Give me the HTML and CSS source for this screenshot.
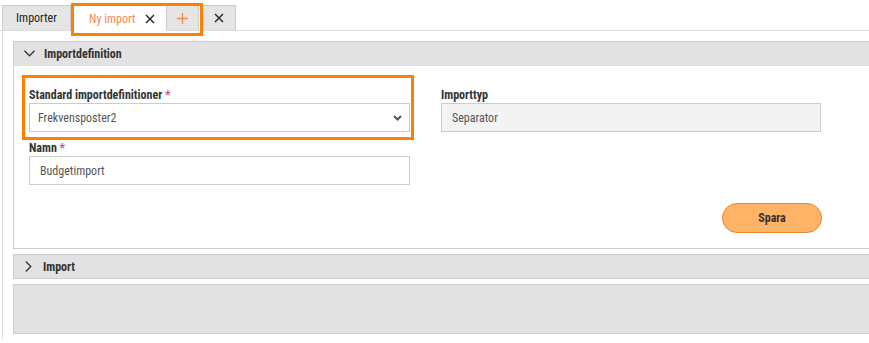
FILE: index.html
```html
<!DOCTYPE html>
<html lang="sv">
<head>
    <meta charset="utf-8">
    <title>Importer</title>
    <link rel="stylesheet" href="styles.css">
</head>
<body>

    <div class="tabs">
        <div class="tab first">Importer</div>
        <div class="tab-group">
            <div class="tab active">Ny import
                <svg class="ico" width="10" height="10" viewBox="0 0 10 10"><path d="M1 1L9 9M9 1L1 9" stroke="#222" stroke-width="1.4" fill="none"/></svg>
            </div>
            <div class="tab plus">
                <svg class="ico" width="11" height="11" viewBox="0 0 11 11"><path d="M5.5 0V11M0 5.5H11" stroke="#f58a4a" stroke-width="1.3" fill="none"/></svg>
            </div>
        </div>
        <div class="tab close">
            <svg class="ico" width="10" height="10" viewBox="0 0 10 10"><path d="M1 1L9 9M9 1L1 9" stroke="#222" stroke-width="1.4" fill="none"/></svg>
        </div>
    </div>

    <div class="content">
        <div class="section">
            <div class="section-head">
                <svg class="chev" width="11" height="7" viewBox="0 0 11 7"><path d="M0.5 0.8L5.5 5.8L10.5 0.8" stroke="#333" stroke-width="1.3" fill="none"/></svg>
                Importdefinition
            </div>
            <div class="section-body">
                <div class="form">
                    <div class="field marked">
                        <label>Standard importdefinitioner <span class="req">*</span></label>
                        <div class="input select">Frekvensposter2
                            <svg width="9" height="6" viewBox="0 0 9 6"><path d="M1 1L4.5 4.5L8 1" stroke="#555" stroke-width="2" fill="none"/></svg>
                        </div>
                    </div>
                    <div class="field">
                        <label>Importtyp</label>
                        <div class="input readonly">Separator</div>
                    </div>
                    <div class="field">
                        <label>Namn <span class="req">*</span></label>
                        <div class="input">Budgetimport</div>
                    </div>
                </div>
                <div class="actions">
                    <button class="btn">Spara</button>
                </div>
            </div>
        </div>

        <div class="section collapsed">
            <div class="section-head">
                <svg class="chev" width="7" height="11" viewBox="0 0 7 11"><path d="M0.8 0.5L5.8 5.5L0.8 10.5" stroke="#333" stroke-width="1.3" fill="none"/></svg>
                Import
            </div>
        </div>

        <div class="empty-box"></div>
    </div>

</body>
</html>
```

FILE: styles.css
```css
body {
    margin: 0;
    font-family: 'Roboto Condensed', 'Liberation Sans Narrow', 'Roboto', sans-serif;
    font-stretch: condensed;
    font-size: 12px;
    color: #333;
    background: white;
    overflow: hidden;
}

.tabs {
    display: flex;
    align-items: flex-end;
    padding: 5px 0 0 2px;
    border-bottom: 1px solid #dddddd;
    height: 25px;
}

.tab {
    box-sizing: border-box;
    height: 25px;
    display: flex;
    align-items: center;
    justify-content: center;
    gap: 8px;
    background-color: #e5e5e5;
    border: 1px solid #cccccc;
    border-bottom: none;
    color: #222;
    font-size: 12px;
}

.tab.first {
    width: 69px;
}

.tab.active {
    width: 94px;
    background-color: white;
    border-color: white;
    color: #f58a5a;
    height: 26px;
    margin-bottom: -1px;
    justify-content: flex-start;
    padding-left: 16px;
    gap: 10px;
}

.tab.plus {
    width: 33px;
}

.tab.close {
    width: 35px;
    margin-left: 2px;
}

.tab-group {
    display: flex;
    align-items: flex-end;
    position: relative;
    margin-left: 1px;
}

.tab-group::after {
    content: "";
    position: absolute;
    top: -2px;
    left: -1px;
    right: -4px;
    bottom: -6px;
    border: 3px solid #ff7f00;
    pointer-events: none;
}

.ico {
    display: block;
}

.content {
    margin-left: 2px;
    border-left: 1px solid #dddddd;
    padding: 10px 0 5px 10px;
    width: 900px;
}

.section {
    border: 1px solid #cccccc;
    border-right: none;
    margin-bottom: 5px;
}

.section-head {
    height: 23px;
    display: flex;
    align-items: center;
    gap: 9px;
    padding-left: 10px;
    background-color: #e2e2e2;
    font-weight: bold;
    color: #333;
}

.section.collapsed .section-head {
    gap: 11px;
    padding-left: 11px;
}

.chev {
    display: block;
}

.section-body {
    background-color: white;
    border-top: 1px solid #dddddd;
    padding: 22px 0 15px 15px;
}

.form {
    display: grid;
    grid-template-columns: 381px 380px;
    column-gap: 31px;
    row-gap: 9px;
}

.field {
    display: flex;
    flex-direction: column;
    gap: 0;
    position: relative;
}

.field.marked::after {
    content: "";
    position: absolute;
    top: -13px;
    left: -7px;
    right: -4px;
    bottom: -8px;
    border: 3px solid #ff7f00;
    pointer-events: none;
}

label {
    font-weight: bold;
    line-height: 15px;
    color: #333;
}

.req {
    color: #b0607a;
}

.input {
    height: 27px;
    border: 1px solid #cccccc;
    display: flex;
    align-items: center;
    justify-content: space-between;
    padding: 0 10px;
    color: #555;
    background: white;
}

.input.select {
    padding: 0 7px 0 8px;
}

.input.readonly {
    background-color: #f3f3f3;
}

.actions {
    display: flex;
    padding-left: 693px;
    margin-top: 18px;
}

.btn {
    width: 100px;
    height: 30px;
    border-radius: 15px;
    background-color: #ffb366;
    border: 1px solid #e8842a;
    font-family: inherit;
    font-stretch: inherit;
    font-size: 12px;
    font-weight: bold;
    color: #333;
}

.empty-box {
    height: 48px;
    background-color: #e2e2e2;
    border: 1px solid #cccccc;
    border-right: none;
}
```
